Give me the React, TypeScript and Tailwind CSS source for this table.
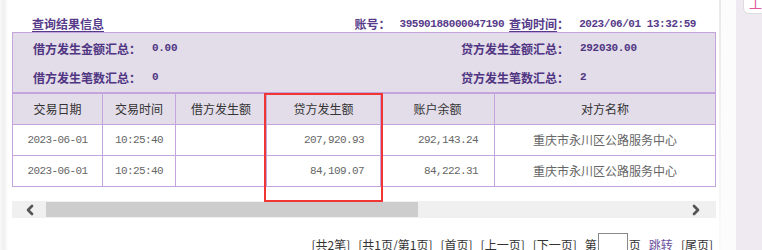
import { ChevronLeft, ChevronRight } from "lucide-react";

const cjk = "font-['Noto_Sans_CJK_SC','Noto_Sans',sans-serif]";
const mono = "font-['Liberation_Mono','DejaVu_Sans_Mono',monospace]";

const columns = [
  { title: "交易日期", width: "w-[90px]" },
  { title: "交易时间", width: "w-[73px]" },
  { title: "借方发生额", width: "w-[91px]" },
  { title: "贷方发生额", width: "w-[114px]" },
  { title: "账户余额", width: "w-[114px]" },
  { title: "对方名称", width: "w-[221px]" },
];

const rows = [
  { date: "2023-06-01", time: "10:25:40", debit: "", credit: "207,920.93", balance: "292,143.24", party: "重庆市永川区公路服务中心" },
  { date: "2023-06-01", time: "10:25:40", debit: "", credit: "84,109.07", balance: "84,222.31", party: "重庆市永川区公路服务中心" },
];

const pager = ["[共2笔]", "[共1页/第1页]", "[首页]", "[上一页]", "[下一页]"];

export default function App() {
  return (
    <div className={`flex h-[250px] w-[762px] overflow-hidden bg-white ${cjk}`}>
      {/* left shadow */}
      <div className="flex w-[12px] shrink-0">
        <div className="w-[8px] bg-gradient-to-r from-[#f9f9f9] via-[#efefef] to-white" />
      </div>

      {/* main panel */}
      <div className="relative w-[704px] shrink-0">
        {/* title row */}
        <div className="flex h-[32px] items-end justify-between pb-[1px] pl-[20px] pr-[20px] text-[12px] font-bold leading-[14px] text-[#573b8a]">
          <span className="underline underline-offset-[2px]">查询结果信息</span>
          <div className="flex items-end">
            <span>账号：</span>
            <span className={`${mono} ml-[9px] text-[11px] tracking-[-0.45px]`}>39590188000047190</span>
            <span className="ml-[5px] underline underline-offset-[2px]">查询时间</span>
            <span>：</span>
            <span className={`${mono} ml-[10px] text-[11px] tracking-[-0.45px]`}>2023/06/01 13:32:59</span>
          </div>
        </div>

        {/* summary */}
        <div className="border-x border-t border-[#c3a4dd] bg-[#e3dde9] pt-[1px] text-[12px] font-bold text-[#4f3582]">
          {[
            ["借方发生金额汇总：", "0.00", "贷方发生金额汇总：", "292030.00"],
            ["借方发生笔数汇总：", "0", "贷方发生笔数汇总：", "2"],
          ].map((r) => (
            <div key={r[0]} className="flex h-[29px] items-center">
              <div className="flex w-[448px] items-center pl-[20px]">
                <span>{r[0]}</span>
                <span className={`${mono} ml-[11px] text-[11px] tracking-[-0.3px]`}>{r[1]}</span>
              </div>
              <div className="flex items-center">
                <span>{r[2]}</span>
                <span className={`${mono} ml-[11px] text-[11px] tracking-[-0.3px]`}>{r[3]}</span>
              </div>
            </div>
          ))}
        </div>

        {/* table */}
        <div className="border-l border-t-2 border-[#c3a4dd]">
          <div className="flex bg-[#e3dde9]">
            {columns.map((c) => (
              <div
                key={c.title}
                className={`${c.width} flex h-[31px] items-center justify-center border-b border-r border-[#c3a4dd] text-[12px] text-[#333333]`}
              >
                {c.title}
              </div>
            ))}
          </div>
          {rows.map((r, i) => (
            <div key={i} className="flex bg-white text-[#666666]">
              <div className={`${mono} flex h-[31px] w-[90px] items-center justify-center border-b border-r border-[#c3a4dd] text-[11px] tracking-[-0.6px]`}>
                {r.date}
              </div>
              <div className={`${mono} flex h-[31px] w-[73px] items-center justify-center border-b border-r border-[#c3a4dd] text-[11px] tracking-[-0.6px]`}>
                {r.time}
              </div>
              <div className="h-[31px] w-[91px] border-b border-r border-[#c3a4dd]">{r.debit}</div>
              <div className={`${mono} flex h-[31px] w-[114px] items-center justify-end border-b border-r border-[#c3a4dd] pr-[16px] text-[11px] tracking-[-0.6px]`}>
                {r.credit}
              </div>
              <div className={`${mono} flex h-[31px] w-[114px] items-center justify-end border-b border-r border-[#c3a4dd] pr-[16px] text-[11px] tracking-[-0.6px]`}>
                {r.balance}
              </div>
              <div className="flex h-[31px] w-[221px] items-center justify-center border-b border-r border-[#c3a4dd] text-[12px]">
                {r.party}
              </div>
            </div>
          ))}
        </div>

        <div className="h-[14px]" />

        {/* horizontal scrollbar */}
        <div className="flex h-[17px] items-center bg-[#f0f0f0]">
          <div className="flex w-[34px] justify-center pl-[2px]">
            <ChevronLeft className="h-[16px] w-[16px] text-[#555555]" strokeWidth={4} />
          </div>
          <div className="h-[15px] w-[372px] bg-[#cdcdcd]" />
          <div className="flex-1" />
          <div className="flex w-[34px] justify-center pr-[6px]">
            <ChevronRight className="h-[16px] w-[16px] text-[#555555]" strokeWidth={4} />
          </div>
        </div>

        {/* pager */}
        <div className="mt-[15px] flex items-start justify-end gap-[8px] pr-[3px] text-[12px] leading-[16px] text-[#333333]">
          {pager.map((p) => (
            <span key={p} className="mt-[4px]">{p}</span>
          ))}
          <span className="mt-[4px] flex items-start">
            第
            <span className="-mt-[4px] mx-[1px] block h-[22px] w-[30px] border border-[#888888] bg-white" />
            页
          </span>
          <span className="mt-[4px] text-[#6b4f9e]">跳转</span>
          <span className="mt-[4px]">[尾页]</span>
        </div>

        {/* highlight box */}
        <div className="absolute left-[252px] top-[93px] h-[109px] w-[119px] border-2 border-[#f03535]" />
      </div>

      {/* right side */}
      <div className="flex w-[20px] shrink-0">
        <div className="w-[3px]" />
        <div className="w-[2px] bg-gradient-to-b from-[#e8e8e8] via-[#f2f2f2] to-[#fafafa]" />
        <div className="flex-1 bg-[#fcfcfc]" />
      </div>
      <div className="flex-1 bg-[#efe9f2]">
        <div className="ml-[7px] -mt-[6px] h-[20px] rounded-bl-[6px] border border-[#dddddd] bg-white pl-[5px] text-[13px] leading-[16px] text-[#e0579a]">
          工
        </div>
      </div>
    </div>
  );
}
